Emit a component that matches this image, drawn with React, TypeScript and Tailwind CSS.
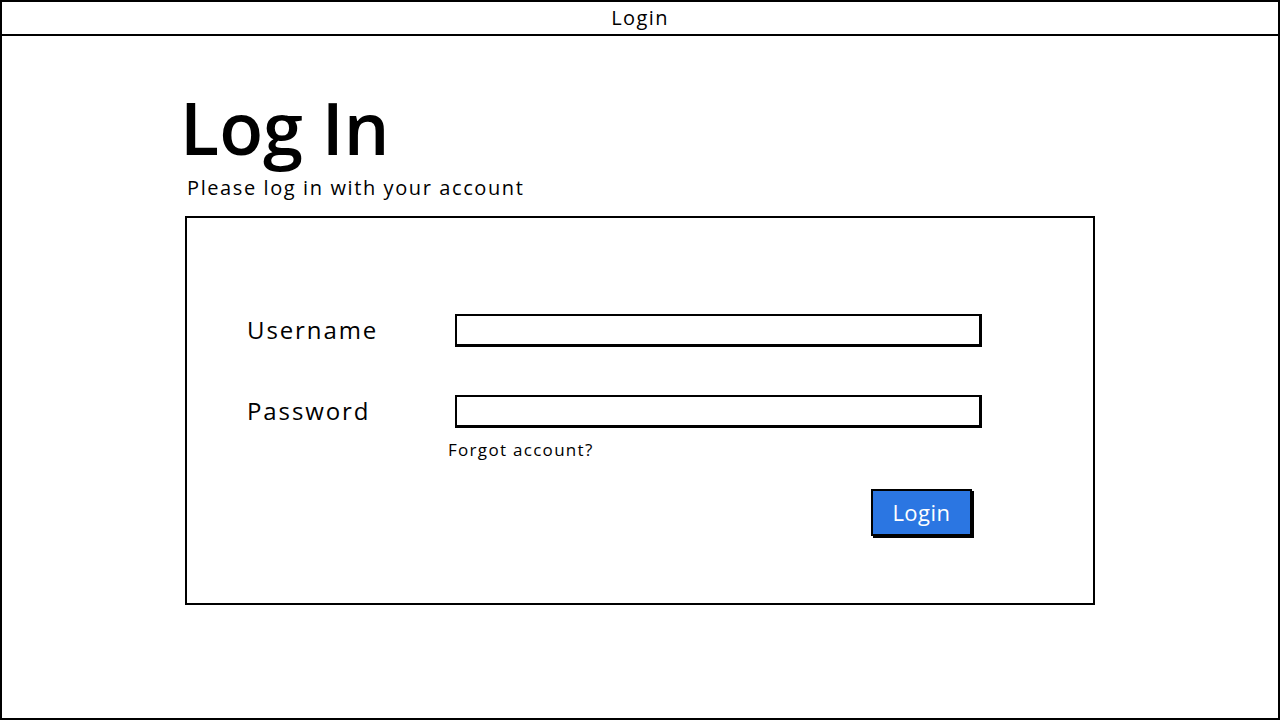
export default function App() {
  return (
    <div
      className="w-[1280px] h-[720px] bg-white text-black flex flex-col overflow-hidden"
      style={{ fontFamily: '"Open Sans", "Liberation Sans", sans-serif' }}
    >
      <div className="w-full h-full border-2 border-black flex flex-col">
        {/* title bar */}
        <div className="h-[34px] border-b-2 border-black flex items-center justify-center text-[20px] leading-none tracking-[1.4px]">
          Login
        </div>

        {/* page */}
        <div className="flex flex-col pl-[182px] pt-[55px]">
          <h1 className="-ml-[4px] text-[72px] font-semibold leading-[72px]">Log In</h1>
          <p className="mt-[13px] ml-[3px] text-[20px] leading-[24px] tracking-[1.6px]">
            Please log in with your account
          </p>

          <div className="mt-[16px] ml-[1px] w-[910px] h-[389px] border-2 border-black flex flex-col pl-[60px] pt-[95px]">
            <div className="flex items-center h-[34px]">
              <span className="w-[208px] text-[24px] tracking-[1.9px]">Username</span>
              <div className="w-[527px] h-[33px] border-2 border-black border-r-[3px] border-b-[3px]" />
            </div>
            <div className="flex items-center h-[34px] mt-[47px]">
              <span className="w-[208px] text-[24px] tracking-[1.9px]">Password</span>
              <div className="w-[527px] h-[33px] border-2 border-black border-r-[3px] border-b-[3px]" />
            </div>
            <div className="ml-[201px] mt-[10px] text-[17px] leading-[24px] tracking-[1.3px]">
              Forgot account?
            </div>
            <div className="flex justify-end w-[725px] mt-[27px]">
              <button className="w-[101px] h-[47px] bg-[#2b76e2] text-white text-[22px] tracking-[0.5px] border-2 border-black shadow-[2px_2px_0_0_#000]">
                Login
              </button>
            </div>
          </div>
        </div>
      </div>
    </div>
  );
}
